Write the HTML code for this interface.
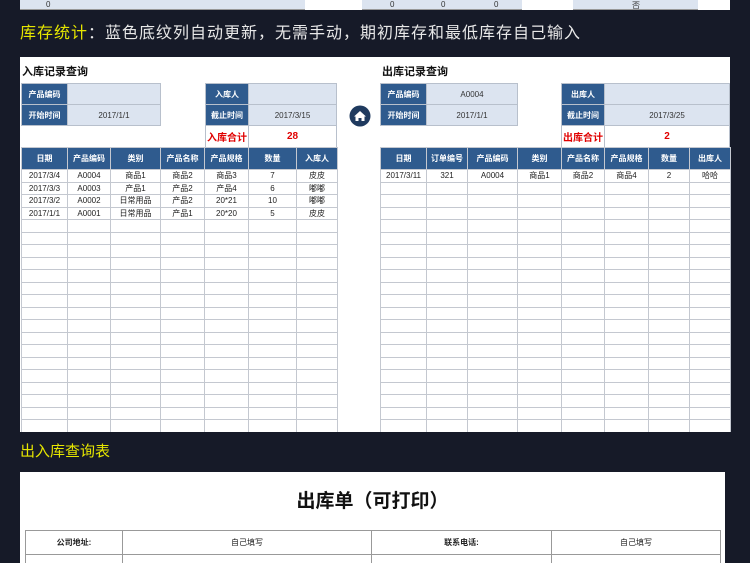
<!DOCTYPE html>
<html style="width:750px;height:563px;overflow:hidden"><head><meta charset="utf-8"><style>
*{margin:0;padding:0;box-sizing:border-box}
body{width:750px;height:563px;background:#161a28;position:relative;overflow:hidden;font-family:"Liberation Sans","Noto Sans CJK SC",sans-serif}
.a{position:absolute}
.c{position:absolute;display:flex;align-items:center;justify-content:center;font-size:8px;color:#333;border:1px solid #b8c0cc}
.l{background:#2f5b8e;color:#fff;font-weight:bold}
.v{background:#dce4f0}
.red{color:#e00000;font-weight:bold;font-size:10px}
table{border-collapse:collapse;position:absolute;table-layout:fixed}
td{border:1px solid #c4c8d0;height:12.5px;font-size:8px;text-align:center;color:#222;padding:0;white-space:nowrap;overflow:hidden}
</style></head><body>
<div class="a" style="left:20px;top:0;width:710px;height:10px;background:#dce4f0;border-bottom:1px solid #999"></div>
<div class="a" style="left:305px;top:0;width:57px;height:10px;background:#fff"></div>
<div class="a" style="left:522px;top:0;width:51px;height:10px;background:#fff"></div>
<div class="a" style="left:698px;top:0;width:32px;height:10px;background:#fff"></div>
<div class="a" style="left:46px;top:0;font-size:8px;color:#333">0</div>
<div class="a" style="left:390px;top:0;font-size:8px;color:#333">0</div>
<div class="a" style="left:441px;top:0;font-size:8px;color:#333">0</div>
<div class="a" style="left:494px;top:0;font-size:8px;color:#333">0</div>
<div class="a" style="left:632px;top:0;font-size:8px;color:#333">否</div>
<div class="a" style="left:20px;top:19px;font-size:16px;color:#e8e8e8;letter-spacing:1px"><span style="color:#e6e600">库存统计</span>：蓝色底纹列自动更新，无需手动，期初库存和最低库存自己输入</div>

<div class="a" style="left:20px;top:57px;width:710px;height:375px;background:#fff"></div>
<div class="a" style="left:22px;top:63px;font-size:11px;font-weight:bold;color:#111">入库记录查询</div>
<div class="a" style="left:382px;top:63px;font-size:11px;font-weight:bold;color:#111">出库记录查询</div>

<div class="c l" style="left:21px;top:83px;width:47px;height:22px">产品编码</div>
<div class="c v" style="left:67px;top:83px;width:94px;height:22px"></div>
<div class="c l" style="left:21px;top:104px;width:47px;height:22px">开始时间</div>
<div class="c v" style="left:67px;top:104px;width:94px;height:22px">2017/1/1</div>
<div class="c l" style="left:205px;top:83px;width:44px;height:22px">入库人</div>
<div class="c v" style="left:248px;top:83px;width:89px;height:22px"></div>
<div class="c l" style="left:205px;top:104px;width:44px;height:22px">截止时间</div>
<div class="c v" style="left:248px;top:104px;width:89px;height:22px">2017/3/15</div>
<div class="c red" style="left:205px;top:125px;width:44px;height:23px;background:#fff">入库合计</div>
<div class="c red" style="left:248px;top:125px;width:89px;height:23px;background:#fff">28</div>

<div class="c l" style="left:380px;top:83px;width:47px;height:22px">产品编码</div>
<div class="c v" style="left:426px;top:83px;width:92px;height:22px">A0004</div>
<div class="c l" style="left:380px;top:104px;width:47px;height:22px">开始时间</div>
<div class="c v" style="left:426px;top:104px;width:92px;height:22px">2017/1/1</div>
<div class="c l" style="left:561px;top:83px;width:44px;height:22px">出库人</div>
<div class="c v" style="left:604px;top:83px;width:126px;height:22px"></div>
<div class="c l" style="left:561px;top:104px;width:44px;height:22px">截止时间</div>
<div class="c v" style="left:604px;top:104px;width:126px;height:22px">2017/3/25</div>
<div class="c red" style="left:561px;top:125px;width:44px;height:23px;background:#fff">出库合计</div>
<div class="c red" style="left:604px;top:125px;width:126px;height:23px;background:#fff">2</div>

<svg class="a" style="left:349px;top:105px" width="22" height="22" viewBox="0 0 22 22"><circle cx="11" cy="11" r="10.5" fill="#1f3a5f"/><path d="M5 11.5 L11 6 L17 11.5 L15.5 11.5 L15.5 16 L12.5 16 L12.5 13 L9.5 13 L9.5 16 L6.5 16 L6.5 11.5Z" fill="#fff"/></svg>

<table style="left:21px;top:147px;width:316px">
<colgroup><col style="width:46px"><col style="width:43px"><col style="width:50px"><col style="width:44px"><col style="width:44px"><col style="width:48px"><col style="width:41px"></colgroup>
<tr style="background:#2f5b8e"><td style="height:22px;color:#fff;font-weight:bold">日期</td><td style="color:#fff;font-weight:bold">产品编码</td><td style="color:#fff;font-weight:bold">类别</td><td style="color:#fff;font-weight:bold">产品名称</td><td style="color:#fff;font-weight:bold">产品规格</td><td style="color:#fff;font-weight:bold">数量</td><td style="color:#fff;font-weight:bold">入库人</td></tr>
<tr><td>2017/3/4</td><td>A0004</td><td>商品1</td><td>商品2</td><td>商品3</td><td>7</td><td>皮皮</td></tr>
<tr><td>2017/3/3</td><td>A0003</td><td>产品1</td><td>产品2</td><td>产品4</td><td>6</td><td>嘟嘟</td></tr>
<tr><td>2017/3/2</td><td>A0002</td><td>日常用品</td><td>产品2</td><td>20*21</td><td>10</td><td>嘟嘟</td></tr>
<tr><td>2017/1/1</td><td>A0001</td><td>日常用品</td><td>产品1</td><td>20*20</td><td>5</td><td>皮皮</td></tr>
<tr><td></td><td></td><td></td><td></td><td></td><td></td><td></td></tr><tr><td></td><td></td><td></td><td></td><td></td><td></td><td></td></tr><tr><td></td><td></td><td></td><td></td><td></td><td></td><td></td></tr><tr><td></td><td></td><td></td><td></td><td></td><td></td><td></td></tr><tr><td></td><td></td><td></td><td></td><td></td><td></td><td></td></tr><tr><td></td><td></td><td></td><td></td><td></td><td></td><td></td></tr><tr><td></td><td></td><td></td><td></td><td></td><td></td><td></td></tr><tr><td></td><td></td><td></td><td></td><td></td><td></td><td></td></tr><tr><td></td><td></td><td></td><td></td><td></td><td></td><td></td></tr><tr><td></td><td></td><td></td><td></td><td></td><td></td><td></td></tr><tr><td></td><td></td><td></td><td></td><td></td><td></td><td></td></tr><tr><td></td><td></td><td></td><td></td><td></td><td></td><td></td></tr><tr><td></td><td></td><td></td><td></td><td></td><td></td><td></td></tr><tr><td></td><td></td><td></td><td></td><td></td><td></td><td></td></tr><tr><td></td><td></td><td></td><td></td><td></td><td></td><td></td></tr><tr><td></td><td></td><td></td><td></td><td></td><td></td><td></td></tr><tr><td></td><td></td><td></td><td></td><td></td><td></td><td></td></tr>
</table>

<table style="left:380px;top:147px;width:350px">
<colgroup><col style="width:46px"><col style="width:41px"><col style="width:50px"><col style="width:44px"><col style="width:43px"><col style="width:44px"><col style="width:41px"><col style="width:41px"></colgroup>
<tr style="background:#2f5b8e"><td style="height:22px;color:#fff;font-weight:bold">日期</td><td style="color:#fff;font-weight:bold">订单编号</td><td style="color:#fff;font-weight:bold">产品编码</td><td style="color:#fff;font-weight:bold">类别</td><td style="color:#fff;font-weight:bold">产品名称</td><td style="color:#fff;font-weight:bold">产品规格</td><td style="color:#fff;font-weight:bold">数量</td><td style="color:#fff;font-weight:bold">出库人</td></tr>
<tr><td>2017/3/11</td><td>321</td><td>A0004</td><td>商品1</td><td>商品2</td><td>商品4</td><td>2</td><td>哈哈</td></tr>
<tr><td></td><td></td><td></td><td></td><td></td><td></td><td></td><td></td></tr><tr><td></td><td></td><td></td><td></td><td></td><td></td><td></td><td></td></tr><tr><td></td><td></td><td></td><td></td><td></td><td></td><td></td><td></td></tr><tr><td></td><td></td><td></td><td></td><td></td><td></td><td></td><td></td></tr><tr><td></td><td></td><td></td><td></td><td></td><td></td><td></td><td></td></tr><tr><td></td><td></td><td></td><td></td><td></td><td></td><td></td><td></td></tr><tr><td></td><td></td><td></td><td></td><td></td><td></td><td></td><td></td></tr><tr><td></td><td></td><td></td><td></td><td></td><td></td><td></td><td></td></tr><tr><td></td><td></td><td></td><td></td><td></td><td></td><td></td><td></td></tr><tr><td></td><td></td><td></td><td></td><td></td><td></td><td></td><td></td></tr><tr><td></td><td></td><td></td><td></td><td></td><td></td><td></td><td></td></tr><tr><td></td><td></td><td></td><td></td><td></td><td></td><td></td><td></td></tr><tr><td></td><td></td><td></td><td></td><td></td><td></td><td></td><td></td></tr><tr><td></td><td></td><td></td><td></td><td></td><td></td><td></td><td></td></tr><tr><td></td><td></td><td></td><td></td><td></td><td></td><td></td><td></td></tr><tr><td></td><td></td><td></td><td></td><td></td><td></td><td></td><td></td></tr><tr><td></td><td></td><td></td><td></td><td></td><td></td><td></td><td></td></tr><tr><td></td><td></td><td></td><td></td><td></td><td></td><td></td><td></td></tr><tr><td></td><td></td><td></td><td></td><td></td><td></td><td></td><td></td></tr><tr><td></td><td></td><td></td><td></td><td></td><td></td><td></td><td></td></tr>
</table>
<div class="a" style="left:0;top:432px;width:750px;height:131px;background:#161a28"></div>

<div class="a" style="left:20px;top:440px;font-size:15px;color:#e6e600">出入库查询表</div>
<div class="a" style="left:20px;top:472px;width:705px;height:91px;background:#fff;overflow:hidden">
<div class="a" style="left:0;top:14px;width:705px;text-align:center;font-size:19px;font-weight:bold;color:#111">出库单（可打印）</div>
<table style="left:5px;top:58px;width:695px">
<colgroup><col style="width:97px"><col style="width:249px"><col style="width:180px"><col style="width:169px"></colgroup>
<tr><td style="height:24px;font-weight:bold;border-color:#999">公司地址:</td><td style="border-color:#999">自己填写</td><td style="font-weight:bold;border-color:#999">联系电话:</td><td style="border-color:#999">自己填写</td></tr>
<tr><td style="height:24px;border-color:#999"></td><td style="border-color:#999"></td><td style="border-color:#999"></td><td style="border-color:#999"></td></tr>
</table>
</div>
</body></html>
